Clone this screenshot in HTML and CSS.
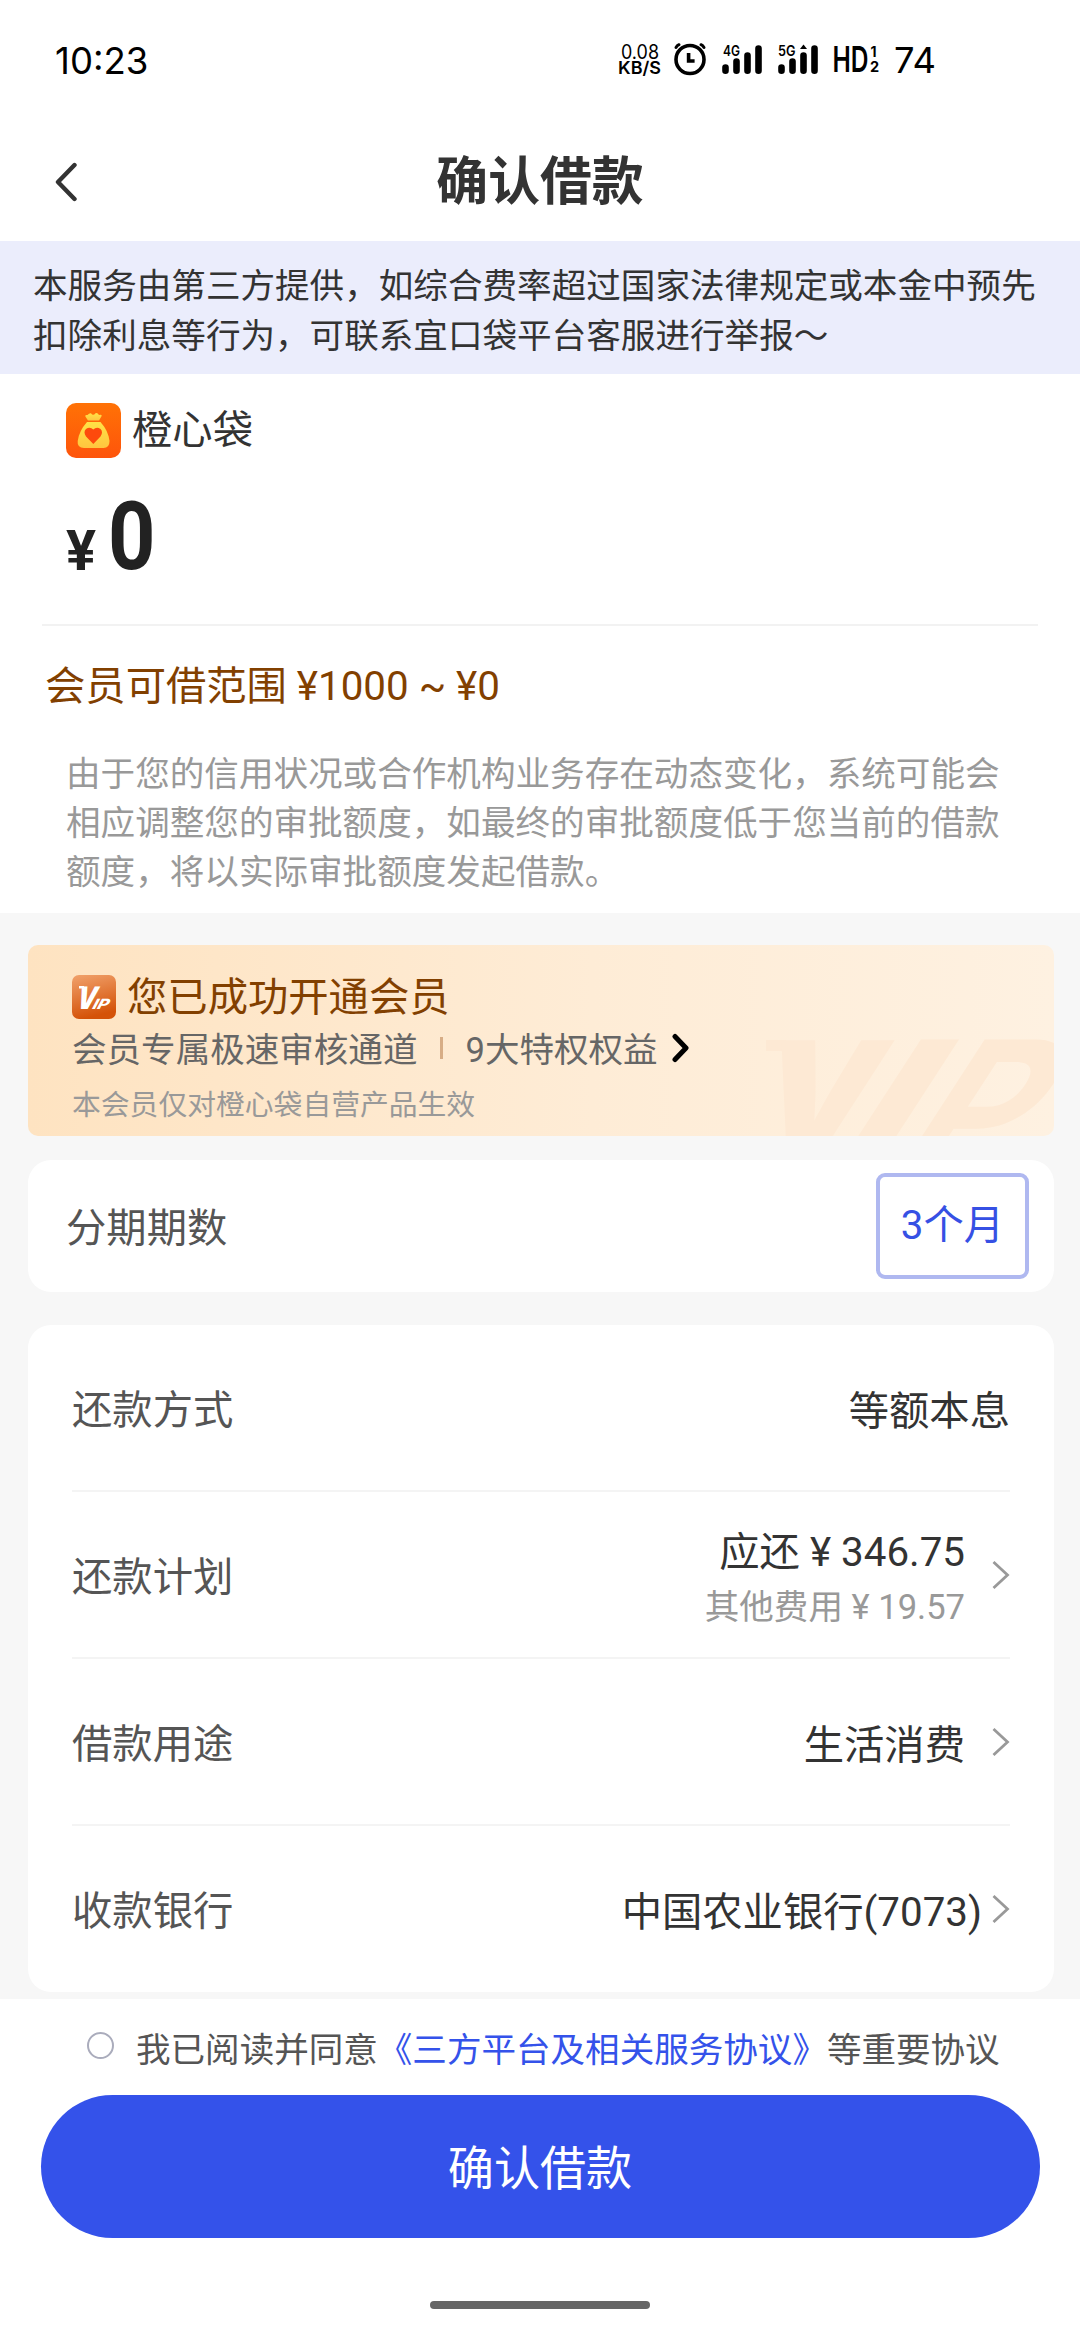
FILE: index.html
```html
<!DOCTYPE html>
<html lang="zh-CN">
<head>
<meta charset="utf-8">
<title>确认借款</title>
<link rel="stylesheet" href="styles.css">
</head>
<body>
<div class="page">
  <header class="status">
    <span class="clock">10:23</span>
    <svg class="status-icons" width="330" height="44" viewBox="0 0 330 44">
      <g class="rate">
        <text x="4" y="21" font-size="19.5" textLength="38" lengthAdjust="spacingAndGlyphs">0.08</text>
        <text x="1" y="36.3" font-size="17.5" font-weight="600" textLength="43" lengthAdjust="spacingAndGlyphs">KB/S</text>
      </g>
      <g fill="none" stroke="#000" stroke-linecap="round">
        <circle cx="73" cy="21.500" r="14" stroke-width="3.6"/>
        <path d="M71.600 15v8h6" stroke-width="3.6" stroke-linecap="butt"/>
        <path d="M59 9.500q1.200-2 3-2.800M87 9.500q-1.200-2-3-2.800" stroke-width="3"/>
      </g>
      <g stroke="#000" stroke-width="6.600" stroke-linecap="round">
        <path d="M108.500 29.500v3.200M119.500 23.500v9.200M130.500 17.500v15.200M141.500 10.500v22.200"/>
        <path d="M164.500 29.500v3.200M175.500 23.500v9.200M186.500 17.500v15.200M197.500 10.500v22.200"/>
      </g>
      <path d="M183 11l3.500-4.500 3.500 4.500z"/>
      <text x="106" y="18" font-size="14.500" font-weight="600" textLength="17" lengthAdjust="spacingAndGlyphs">4G</text>
      <text x="161" y="18" font-size="14.500" font-weight="600" textLength="17.500" lengthAdjust="spacingAndGlyphs">5G</text>
      <text x="215.500" y="34.300" font-size="35" font-weight="600" textLength="36" lengthAdjust="spacingAndGlyphs">HD</text>
      <text x="253.500" y="18.500" font-size="14" font-weight="700">1</text>
      <text x="253" y="34.300" font-size="14.500" font-weight="700">2</text>
      <text x="277" y="34.800" font-size="36" font-weight="400" textLength="42" lengthAdjust="spacingAndGlyphs">74</text>
    </svg>
  </header>

  <nav class="navbar">
    <svg class="back" width="24" height="40" viewBox="0 0 24 40"><path d="M20.500 3L4 20l16.500 17"/></svg>
    <h1 class="title">确认借款</h1>
  </nav>

  <p class="notice">本服务由第三方提供，如综合费率超过国家法律规定或本金中预先<br>扣除利息等行为，可联系宜口袋平台客服进行举报～</p>

  <section class="loan">
    <div class="brand">
      <svg width="55" height="55" viewBox="0 0 55 55">
        <defs>
          <linearGradient id="brandBg" x1="0" y1="0" x2="0" y2="1"><stop offset="0" stop-color="#ff7206"/><stop offset="1" stop-color="#fe540b"/></linearGradient>
          <linearGradient id="bag" x1="0" y1="0" x2="0" y2="1"><stop offset="0" stop-color="#ffe246"/><stop offset="1" stop-color="#ffc53f"/></linearGradient>
        </defs>
        <rect width="55" height="55" rx="10" fill="url(#brandBg)"/>
        <path d="M20 14.500Q18 11.500 21.500 12Q23 10 25 10.200Q27 13.500 29.500 10.200Q31.500 9.500 33 12Q37.500 11 34.500 15L33 17.500H22Z" fill="url(#bag)"/>
        <path d="M21 19H34.500Q42.500 28 43.500 38Q43.500 45 37.500 45H18Q11 45 11.700 38Q13 28 21 19Z" fill="url(#bag)"/>
        <path d="M27.300 41L20 33.500Q17 29 20 26Q24 23.500 27.300 26.500Q30.600 23.500 34.500 26Q37.500 29 34.500 33.500Z" fill="#fd4a0c"/>
      </svg>
      <span>橙心袋</span>
    </div>
    <div class="amount"><span class="yen">¥</span><span class="digit">0</span></div>
    <div class="range">会员可借范围 ¥1000 ~ ¥0</div>
    <p class="disclaimer">由于您的信用状况或合作机构业务存在动态变化，系统可能会<br>相应调整您的审批额度，如最终的审批额度低于您当前的借款<br>额度，将以实际审批额度发起借款。</p>
  </section>

  <main class="content">
    <section class="vip">
      <svg class="watermark" width="296" height="100" viewBox="0 0 296 100">
        <g fill="#fde9d4" font-weight="900" font-size="182">
          <path d="M8 4H28V15H8Z"/>
          <text transform="translate(-12 109) skewX(-17)" font-size="144" textLength="120" lengthAdjust="spacingAndGlyphs">V</text>
          <text transform="translate(68 136) skewX(-33)" textLength="56" lengthAdjust="spacingAndGlyphs">I</text>
          <text transform="translate(129 136) skewX(-33)" font-weight="700" textLength="116" lengthAdjust="spacingAndGlyphs">P</text>
        </g>
      </svg>
      <div class="vip-title">
        <svg width="44" height="44" viewBox="0 0 44 44">
          <defs><linearGradient id="vipBg" x1="0" y1="0" x2=".25" y2="1"><stop offset="0" stop-color="#f1a26c"/><stop offset="1" stop-color="#d45208"/></linearGradient></defs>
          <rect width="44" height="44" rx="7" fill="url(#vipBg)"/>
          <g fill="#fff" font-weight="900">
            <path d="M7 11h5v2.500H7z"/>
            <text transform="translate(2.500 33.500) skewX(-17)" font-size="31" textLength="19.500" lengthAdjust="spacingAndGlyphs">V</text>
            <text transform="translate(19 33.500) skewX(-28)" font-size="14" font-weight="800" textLength="16" lengthAdjust="spacingAndGlyphs">IP</text>
          </g>
        </svg>
        <span>您已成功开通会员</span>
      </div>
      <div class="vip-perks">
        <span>会员专属极速审核通道</span><i class="bar"></i><span>9大特权权益</span>
        <svg width="20" height="30" viewBox="0 0 20 30"><path d="M4 3.500L15 15L4 26.500"/></svg>
      </div>
      <div class="vip-note">本会员仅对橙心袋自营产品生效</div>
    </section>

    <section class="card term">
      <span class="label">分期期数</span>
      <span class="tag">3个月</span>
    </section>

    <section class="card rows">
      <div class="row"><span class="label">还款方式</span><span class="value">等额本息</span></div>
      <div class="row">
        <span class="label">还款计划</span>
        <span class="value plan"><span>应还 ¥ 346.75</span><small>其他费用 ¥ 19.57</small></span>
        <svg class="arrow" width="20" height="32" viewBox="0 0 20 32"><path d="M3.500 3L17.500 16L3.500 29"/></svg>
      </div>
      <div class="row">
        <span class="label">借款用途</span>
        <span class="value purpose">生活消费</span>
        <svg class="arrow" width="20" height="32" viewBox="0 0 20 32"><path d="M3.500 3L17.500 16L3.500 29"/></svg>
      </div>
      <div class="row">
        <span class="label">收款银行</span>
        <span class="value bank">中国农业银行(7073)</span>
        <svg class="arrow" width="20" height="32" viewBox="0 0 20 32"><path d="M3.500 3L17.500 16L3.500 29"/></svg>
      </div>
    </section>
  </main>

  <footer class="footer">
    <div class="agree"><i class="radio"></i><span>我已阅读并同意<a class="link">《三方平台及相关服务协议》</a>等重要协议</span></div>
    <button class="submit" type="button">确认借款</button>
    <div class="home"></div>
  </footer>
</div>
</body>
</html>
```
FILE: styles.css
```css
* { box-sizing: border-box; }

body {
  margin: 0;
  background: #fff;
  color: #333;
  font-family: Roboto, "Noto Sans CJK SC", sans-serif;
  font-size: 40.32px;
}

h1, p { margin: 0; }
svg { display: block; flex: none; }

.page {
  display: flex;
  flex-direction: column;
  width: 1080px;
  height: 2340px;
  overflow: hidden;
}

/* System status bar */
.status {
  display: flex;
  align-items: center;
  justify-content: space-between;
  height: 120px;
  padding: 0 133px 0 55px;
  color: #000;
  font-family: Inter, sans-serif;
}
.clock { padding-top: 2px; font-size: 36.6px; font-weight: 400; line-height: 44px; }
.status-icons { font-family: Inter, sans-serif; }

/* Title bar */
.navbar {
  display: grid;
  grid-template-columns: 100px 1fr 100px;
  align-items: center;
  height: 121px;
  padding: 2px 54px 0;
}
.back path {
  fill: none;
  stroke: #333;
  stroke-width: 4.4;
  stroke-linecap: round;
  stroke-linejoin: round;
}
.title {
  padding-top: 2px;
  font-size: 51.84px;
  font-weight: 700;
  line-height: 72px;
  text-align: center;
}

.notice {
  height: 133px;
  padding: 20px 0 0 33px;
  background: #ebedfc;
  font-size: 34.6px;
  line-height: 50px;
  white-space: nowrap;
}

/* Loan amount */
.loan { height: 539px; padding: 29px 42px 0; }
.brand {
  display: flex;
  align-items: center;
  gap: 11px;
  height: 55px;
  padding-left: 24px;
}
.brand span { line-height: 50px; }
.amount {
  display: flex;
  align-items: flex-start;
  height: 168px;
  padding-left: 24px;
  border-bottom: 2px solid #f2f2f2;
  color: #222;
  font-weight: 700;
}
.yen {
  width: 42px;
  padding-top: 65px;
  font-size: 56px;
  line-height: 56px;
}
.digit {
  padding-top: 32px;
  font-size: 94px;
  line-height: 94px;
  transform: scaleX(.88);
  transform-origin: 0 0;
}
.range {
  height: 124px;
  padding: 29px 0 0 3px;
  color: #824000;
  line-height: 64px;
}
.disclaimer {
  padding-left: 24px;
  color: #999;
  font-size: 34.6px;
  line-height: 49px;
  white-space: nowrap;
}

/* Scrolling content */
.content {
  height: 1086px;
  padding: 32px 26px 0 28px;
  background: #f7f7f7;
}
.vip {
  position: relative;
  height: 191px;
  padding: 30px 44px 0;
  overflow: hidden;
  border-radius: 10px;
  background: linear-gradient(90deg, #fee3c1, #feecd6 55%, #fef1e1);
}
.watermark { position: absolute; right: 0; bottom: 0; font-family: Inter, sans-serif; }
.vip-title {
  display: flex;
  align-items: center;
  gap: 11px;
  height: 44px;
  color: #824000;
}
.vip-title svg { font-family: Inter, sans-serif; }
.vip-title span { padding-bottom: 7px; }
.vip-perks {
  display: flex;
  align-items: center;
  height: 57px;
  margin-bottom: 1px;
  color: #666;
  font-size: 34.56px;
}
.vip-perks span { padding-bottom: 2px; }
.vip-perks path {
  fill: none;
  stroke: #000;
  stroke-width: 5;
  stroke-linecap: round;
  stroke-linejoin: round;
}
.vip-perks svg { margin-left: 13px; }
.bar { width: 3px; height: 22px; margin: 0 22px 0 23px; background: #d7ad86; }
.vip-note { color: #999; font-size: 28.8px; line-height: 56px; }

.card { border-radius: 23px; background: #fff; }
.label { padding-bottom: 2px; color: #555; }
.term {
  display: flex;
  align-items: center;
  justify-content: space-between;
  height: 132px;
  margin-top: 24px;
  padding: 0 25px 0 38px;
}
.term .label { padding-bottom: 4px; }
.tag {
  width: 153px;
  height: 106px;
  border: 4px solid #afb8f0;
  border-radius: 9px;
  color: #3650e4;
  line-height: 97px;
  text-align: center;
}
.rows { height: 667px; margin-top: 33px; padding: 0 44px; }
.row {
  display: flex;
  align-items: center;
  height: 167px;
  border-bottom: 2px solid #f4f4f4;
}
.row:last-child { padding-bottom: 2px; border-bottom: 0; }
.value { margin-left: auto; padding-bottom: 1px; text-align: right; }
.plan, .purpose { margin-right: 25px; }
.plan { padding-top: 11px; }
.plan span, .plan small { display: block; line-height: 54px; }
.plan small { color: #999; font-size: 34.56px; }
.bank { margin-right: 8px; }
.arrow path { fill: none; stroke: #999; stroke-width: 2.8; }

/* Bottom action area */
.footer {
  display: flex;
  flex-direction: column;
  align-items: center;
  height: 341px;
}
.agree {
  display: flex;
  align-items: center;
  width: 914px;
  height: 96px;
  gap: 22px;
  padding-left: 4px;
  color: #555;
  font-size: 34.56px;
  white-space: nowrap;
}
.radio {
  flex: none;
  width: 27px;
  height: 27px;
  margin-bottom: 3px;
  border: 2px solid #aaacbc;
  border-radius: 50%;
}
.link { color: #3452ea; }
.submit {
  width: 999px;
  height: 143px;
  padding-top: 5px;
  border: 0;
  border-radius: 72px;
  background: #3452ea;
  color: #fff;
  font: 46.08px/64px Roboto, "Noto Sans CJK SC", sans-serif;
}
.home {
  width: 220px;
  height: 8px;
  margin-top: 63px;
  border-radius: 4px;
  background: #666;
}
```
